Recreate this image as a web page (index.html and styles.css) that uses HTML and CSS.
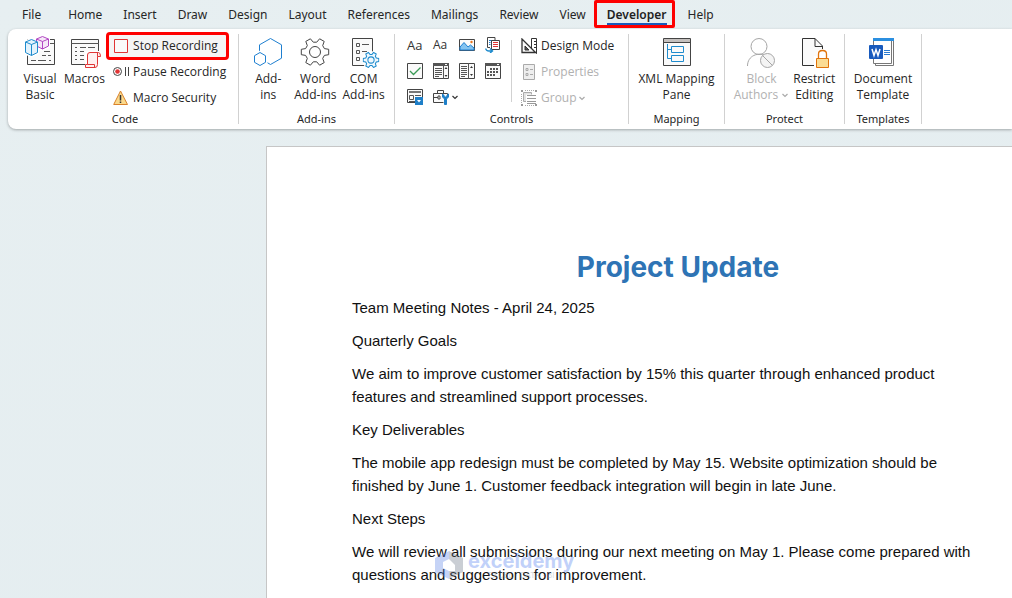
FILE: index.html
```html
<!DOCTYPE html>
<html lang="en">
<head>
<meta charset="utf-8">
<title>Project Update</title>
<link rel="stylesheet" href="styles.css">
</head>
<body>
<svg class="defs" width="0" height="0" aria-hidden="true">
  <symbol id="gear" viewBox="-15 -15 30 30">
    <path d="M9.4-3.4 13.7-2.7V2.7L9.4 3.4 7.7 6.4 9.2 10.6 4.6 13.2 1.7 9.8H-1.7L-4.6 13.2-9.2 10.6-7.7 6.4-9.4 3.4-13.7 2.7V-2.7L-9.4-3.4-7.7-6.4-9.2-10.6-4.6-13.2-1.7-9.8H1.7L4.6-13.2 9.2-10.6 7.7-6.4Z"/>
    <circle r="5.5"/>
  </symbol>
</svg>
<nav class="tabs" aria-label="Ribbon tabs">
  <button class="tab tab-file">File</button>
  <button class="tab">Home</button>
  <button class="tab">Insert</button>
  <button class="tab">Draw</button>
  <button class="tab">Design</button>
  <button class="tab">Layout</button>
  <button class="tab">References</button>
  <button class="tab">Mailings</button>
  <button class="tab">Review</button>
  <button class="tab">View</button>
  <button class="tab tab-active" aria-current="page">Developer</button>
  <button class="tab">Help</button>
</nav>

<div class="ribbon">
  <section class="group group-code">
    <div class="group-body code-body">
      <button class="large">
        <svg class="icon-lg" viewBox="24 36 32 32">
          <path d="M27.500 39.500H54.500V64.500H27.500Z" fill="#fafafa" stroke="#444"/>
          <path d="M44 43.500H54M44 51.500H50M42 55.500H46M48 55.500H51M31 60.500H36M38 60.500H46M49 60.500H51" stroke="#555"/>
          <path d="M24 41 31.500 37.500 35 39V36H50V48L42 51 39 50V54L31.500 57.500 24 54Z" fill="#fff"/>
          <path d="M42.500 36.500 48.500 39V46L42.500 49 36.500 46V39Z" fill="#f6e8f8" stroke="#b146c2"/>
          <path d="M36.500 39 42.500 41.500 48.500 39M42.500 41.500V49" fill="none" stroke="#b146c2"/>
          <path d="M31.500 39.500 37.500 42V52.500L31.500 55.500 25.500 52.500V42Z" fill="#e3f2fc" stroke="#1e8bcd"/>
          <path d="M25.500 42 31.500 44.500 37.500 42M31.500 44.500V55.500" fill="none" stroke="#1e8bcd"/>
        </svg>
        <span>Visual<br>Basic</span>
      </button>
      <button class="large">
        <svg class="icon-lg" viewBox="70 36 32 32">
          <path d="M72.500 39.500H99.500V64.500H72.500Z" fill="#fafafa" stroke="#444"/>
          <path d="M72 43.500H100M76 47.500H78M81 47.500H87M89 47.500H96M76 51.500H78M81 51.500H85M76 55.500H78M81 55.500H85M76 59.500H78M81 59.500H85" fill="none" stroke="#555"/>
          <path d="M86 51H102V68H86Z" fill="#fff"/>
          <path d="M91 52.500H99.500Q101.500 52.500 101.500 56.500H98.500V64.500Q98.500 67.500 96 67.500H86.500V64.500H88.500V55Q88.500 52.500 91 52.500Z" fill="#fff1f1" stroke="#e03535"/>
          <path d="M88.500 64.500H95.500V67M98.500 56.500V53" fill="none" stroke="#e03535"/>
        </svg>
        <span>Macros</span>
      </button>
      <div class="stack">
        <button class="small marked">
          <svg class="icon" viewBox="0 0 16 16"><path d="M1.500 1.500H14.500V14.500H1.500Z" fill="#fafafa" stroke="#e03535"/></svg>
          <span>Stop Recording</span>
        </button>
        <button class="small">
          <svg class="icon" viewBox="0 0 16 16"><circle cx="4.500" cy="7.500" r="4" fill="#fff" stroke="#444"/><circle cx="4.500" cy="7.500" r="2.300" fill="#e03535"/><path d="M12.500 3V12M15.500 3V12" stroke="#444"/></svg>
          <span>Pause Recording</span>
        </button>
        <button class="small">
          <svg class="icon" viewBox="0 0 16 16"><path d="M7.500 1 14.500 14.500H.700Z" fill="#fbd98b" stroke="#d9822b"/><path d="M7.500 5V10.500M7.500 11.500V13" stroke="#333" stroke-width="1.500"/></svg>
          <span>Macro Security</span>
        </button>
      </div>
    </div>
    <h2 class="group-name">Code</h2>
  </section>

  <section class="group">
    <div class="group-body addins-body">
      <button class="large">
        <svg class="icon-lg" viewBox="252 36 32 32" stroke="#1e7fd0" fill="#fafafa">
          <path d="M270.500 38.500 281.500 44.800V58.200L270.500 64.500 259.500 58.200V44.800Z"/>
          <path d="M260 51 267 55V64L260 68 253 64V55Z" fill="#fff" stroke="#fff"/>
          <path d="M260 52.500 265.500 55.700V62.300L260 65.500 254.500 62.300V55.700Z"/>
        </svg>
        <span>Add-<br>ins</span>
      </button>
      <button class="large">
        <svg class="icon-lg" viewBox="298 36 32 32" stroke="#444" fill="#fafafa"><use href="#gear" x="299" y="37" width="30" height="30"/></svg>
        <span>Word<br>Add-ins</span>
      </button>
      <button class="large">
        <svg class="icon-lg" viewBox="348 36 32 32">
          <path d="M352.500 38.500H372.500V65.500H352.500Z" fill="#fafafa" stroke="#444"/>
          <path d="M356.500 43.500H359.500V46.500H356.500ZM356.500 50.500H359.500V53.500H356.500ZM356.500 57.500H359.500V60.500H356.500ZM362 44.500H369M362 51.500H367" fill="none" stroke="#555"/>
          <circle cx="371" cy="60" r="9" fill="#fff"/>
          <g stroke="#1e8bcd" stroke-width="1.800" fill="#eef7fd"><use href="#gear" x="362.500" y="51.500" width="17" height="17"/></g>
        </svg>
        <span>COM<br>Add-ins</span>
      </button>
    </div>
    <h2 class="group-name">Add-ins</h2>
  </section>

  <section class="group">
    <div class="group-body controls-body">
      <div class="palette">
        <button class="tool glyph" aria-label="Rich text control">Aa</button>
        <button class="tool glyph glyph-light" aria-label="Plain text control">Aa</button>
        <button class="tool" aria-label="Picture control"><svg class="icon" viewBox="0 0 16 16"><path d="M.5 2.500H15.500V13.500H.5Z" fill="#fafafa" stroke="#444"/><path d="M1 10 5 5.500 9 10 11.500 8 15 11V13H1Z" fill="#83c3f0" stroke="#1e7fd0"/><circle cx="12.500" cy="5" r="1.200" fill="#e8731c"/></svg></button>
        <button class="tool" aria-label="Building block gallery"><svg class="icon" viewBox="0 0 16 16"><path d="M10 3V.5H2.500V10.500H5" fill="#fff" stroke="#444"/><path d="M4 3.500H8M4 5.500H5.500M4 7.500H5.500" stroke="#1e7fd0"/><path d="M6.500 3.500H14.500V12.500H6.500Z" fill="#fff" stroke="#444"/><path d="M8 5.500H13M8 7.500H13M8 9.500H13" stroke="#e03535"/><path d="M.7 11.500Q1 14 4 14H7M5 11.500 7.500 14 5 16" fill="none" stroke="#1e8bcd" stroke-width="1.400"/></svg></button>
        <button class="tool" aria-label="Check box control"><svg class="icon" viewBox="0 0 16 16"><path d="M.5.5H15.500V15.500H.5Z" fill="#fafafa" stroke="#444"/><path d="M3 8 6.500 11.500 13.500 4.500" fill="none" stroke="#3a9a56" stroke-width="1.300"/></svg></button>
        <button class="tool" aria-label="Combo box control"><svg class="icon" viewBox="0 0 16 16"><path d="M.5.5H15.500V15.500H.5Z" fill="#fafafa" stroke="#444"/><path d="M0 1.500H16" stroke="#555" stroke-width="3"/><path d="M10.500 3V16M2 5.500H9M2 7.500H9M2 9.500H9M2 11.500H9M2 13.500H6" stroke="#555"/><path d="M13 4 14.500 6H11.500ZM13 14 14.500 12H11.500Z" fill="#333"/><path d="M12 1 13 2 14 1" fill="none" stroke="#fff"/></svg></button>
        <button class="tool" aria-label="Drop-down list control"><svg class="icon" viewBox="0 0 16 16"><path d="M.5.5H15.500V15.500H.5Z" fill="#fafafa" stroke="#444"/><path d="M9.500 0V16M2 3.500H8M2 5.500H8M2 7.500H8M2 9.500H8M2 11.500H8M2 13.500H6" stroke="#555"/><path d="M12.500 3 14 5H11ZM12.500 13 14 11H11Z" fill="#333"/></svg></button>
        <button class="tool" aria-label="Date picker control"><svg class="icon" viewBox="0 0 16 16"><path d="M.5.5H15.500V15.500H.5Z" fill="#fafafa" stroke="#444"/><path d="M0 1.500H16" stroke="#555" stroke-width="3"/><path d="M5 6H14M2 9H14M2 12H11" stroke="#555" stroke-width="2" stroke-dasharray="2 1"/><path d="M12 1 13 2 14 1" fill="none" stroke="#fff"/></svg></button>
        <button class="tool" aria-label="Repeating section control"><svg class="icon" viewBox="0 0 16 16"><path d="M.5.500H15.500V13.500H.5Z" fill="#fafafa" stroke="#444"/><path d="M2 3H14" stroke="#777" stroke-width="2"/><path d="M2.500 6.500H6.500V10.500H2.500ZM8 6.500H14M2 12.500H8" fill="none" stroke="#555"/><path d="M8 8H16V16H8Z" fill="#1e7fc8"/><path d="M10 11H14L12 13.500Z" fill="#fff"/></svg></button>
        <button class="tool tool-menu" aria-label="Legacy tools"><svg class="icon" viewBox="0 0 16 16"><path d="M.5 4.500H14.500V13.500H.5ZM4.500 4.500V1.500H10.500V4.500M0 8.500H5M5 7V10H7V7Z" fill="#fafafa" stroke="#444"/><path d="M8.500 6H16.500V16H10.500V10L8.500 8Z" fill="#fff"/><path d="M9.500 5V8L11.500 10V15.500H13.500V10L15.500 8V5L13.800 6.500V8H11.200V6.500Z" fill="#1e7fc8" stroke="#1e7fc8"/></svg><svg class="caret" viewBox="0 0 8 8"><path d="M1.500 3 4 5.500 6.500 3" fill="none" stroke="#333" stroke-width="1.200"/></svg></button>
      </div>
      <div class="stack divided">
        <button class="small">
          <svg class="icon" viewBox="0 0 16 16"><path d="M1 1V14.500H14.500Z" fill="#fafafa" stroke="#333" stroke-width="1.300"/><path d="M4 8V12H8Z" fill="#555" stroke="#333"/><path d="M10.500.5H15.500V15.500L10.500 10.500ZM13 3.500H16M13 6.500H16M13 9.500H16" fill="none" stroke="#333"/></svg>
          <span>Design Mode</span>
        </button>
        <button class="small" disabled>
          <svg class="icon" viewBox="0 0 16 16"><path d="M2.500.500H13.500V15.500H2.500Z" fill="#eee" stroke="#aaa"/><path d="M5 4.500H7V6.500H5ZM5 9.500H7V11.500H5ZM9 5.500H12M9 10.500H12" fill="none" stroke="#aaa"/></svg>
          <span>Properties</span>
        </button>
        <button class="small" disabled>
          <svg class="icon" viewBox="0 0 16 16"><path d="M2.500 2.500H10.500V11.500H2.500Z" fill="#e2e2e2" stroke="#aaa"/><path d="M5 4.500H16V14.500H5Z" fill="#fff"/><path d="M6 5.500H15M6 8.500H15M6 11.500H15M6 13.500H15" stroke="#999"/><path d="M0 0H2V2H0ZM14 0H16V2H14ZM0 14H2V16H0ZM14 14H16V16H14Z" fill="#999"/><path d="M4 .5H13M4 15.500H13M.5 4V13" stroke="#aaa" stroke-dasharray="1 1"/></svg>
          <span>Group</span>
          <svg class="caret caret-near" viewBox="0 0 8 8"><path d="M1.500 3 4 5.500 6.500 3" fill="none" stroke="#aaa" stroke-width="1.200"/></svg>
        </button>
      </div>
    </div>
    <h2 class="group-name">Controls</h2>
  </section>

  <section class="group">
    <div class="group-body center-body">
      <button class="large">
        <svg class="icon-lg" viewBox="661 36 32 32">
          <path d="M663.500 38.500H690.500V65.500H663.500Z" fill="#fafafa" stroke="#444"/>
          <path d="M664 39H690V42H664Z" fill="#c4c0be"/><path d="M663 42.500H691" stroke="#444"/>
          <path d="M667.500 44V58.500H671M667.500 49.500H671M671.500 46.500H683.500V52.500H671.500ZM671.500 55.500H683.500V61.500H671.500Z" fill="none" stroke="#1e8bcd"/>
        </svg>
        <span>XML Mapping<br>Pane</span>
      </button>
    </div>
    <h2 class="group-name">Mapping</h2>
  </section>

  <section class="group">
    <div class="group-body center-body">
      <button class="large" disabled>
        <svg class="icon-lg" viewBox="748 36 32 32" fill="#f1f1f1" stroke="#a6a6a6">
          <path d="M750.500 66C750.500 51 772 51 773 62V66"/><circle cx="762" cy="46.500" r="8"/>
          <circle cx="770.500" cy="60.500" r="7" fill="#f4f4f4"/><path d="M765.500 55.500 775.500 65.500"/>
        </svg>
        <span>Block<br>Authors <svg class="caret" viewBox="0 0 8 8"><path d="M1.500 3 4 5.500 6.500 3" fill="none" stroke="#aaa" stroke-width="1.200"/></svg></span>
      </button>
      <button class="large">
        <svg class="icon-lg" viewBox="800 36 32 32">
          <path d="M804.500 38.500H817L824.500 46V65.500H804.500Z" fill="#fafafa" stroke="#333"/><path d="M817 38.500V46.500H824.500" fill="none" stroke="#333"/>
          <path d="M816 56H833V68H816Z" fill="#fff"/><path d="M819 57V54Q819 49 824.500 49T830 54V57Z" fill="#fff"/>
          <path d="M820.500 58V54Q820.500 50.500 824.500 50.500T828.500 54V58" fill="none" stroke="#e0730c" stroke-width="1.300"/><path d="M818.500 58.500H830.500V67.500H818.500Z" fill="#fbdc94" stroke="#e0730c"/>
        </svg>
        <span>Restrict<br>Editing</span>
      </button>
    </div>
    <h2 class="group-name">Protect</h2>
  </section>

  <section class="group">
    <div class="group-body center-body">
      <button class="large">
        <svg class="icon-lg" viewBox="867 36 32 32">
          <path d="M875.500 41V65.500H893.500V38" fill="#fff" stroke="#777"/><path d="M873.500 38.500H891.500V63.500H873.500Z" fill="#fff" stroke="#777"/>
          <path d="M873 38H894V41H873Z" fill="#2b8fe0"/><path d="M884 50.500H890M884 52.500H890M884 54.500H890" stroke="#2b7cd3"/>
          <rect x="869" y="45" width="14" height="14" rx="1" fill="#185abd"/><path d="M872 49 874 55.500 876 49.500 878 55.500 880 49" fill="none" stroke="#fff" stroke-width="1.500"/>
        </svg>
        <span>Document<br>Template</span>
      </button>
    </div>
    <h2 class="group-name">Templates</h2>
  </section>
</div>

<main class="page">
  <h1>Project Update</h1>
  <p>Team Meeting Notes - April 24, 2025</p>
  <p>Quarterly Goals</p>
  <p>We aim to improve customer satisfaction by 15% this quarter through enhanced product features and streamlined support processes.</p>
  <p>Key Deliverables</p>
  <p>The mobile app redesign must be completed by May 15. Website optimization should be finished by June 1. Customer feedback integration will begin in late June.</p>
  <p>Next Steps</p>
  <p>We will review all submissions during our next meeting on May 1. Please come prepared with questions and suggestions for improvement.</p>
  <div class="watermark">
    <svg class="watermark-logo" viewBox="0 0 28 28"><path d="M14 0 28 7V21L14 28Z" fill="#6b7486"/><path d="M14 0 0 7V21L14 28V20L8 17V11L14 8Z" fill="#5b84e8"/><path d="M14 8 20 14V20H14Z" fill="#fff"/></svg>
    <div class="watermark-text"><strong>exceldemy</strong><small>EXCEL · DATA · BI</small></div>
  </div>
</main>
</body>
</html>
```
FILE: styles.css
```css
* { box-sizing: border-box; }

body {
  margin: 0;
  min-height: 100vh;
  overflow: hidden;
  display: flex;
  flex-direction: column;
  background: linear-gradient(160deg, #e7eff1, #e4edf0);
  color: #262626;
  font: 12px/16px "Noto Sans", "Open Sans", sans-serif;
}

button {
  margin: 0;
  padding: 0;
  border: 0;
  background: none;
  color: inherit;
  font: inherit;
}

button:disabled { color: #b1b1b1; }

.defs { position: absolute; }

/* Tabs */
.tabs {
  display: flex;
  gap: 21px;
  height: 29px;
  padding: 0 22px;
}

.tab { position: relative; white-space: nowrap; }
.tab-file { margin-right: 6px; }
.tab-active { font-weight: 600; color: #222; }

.tab-active::before {
  content: "";
  position: absolute;
  inset: 23px 0 4px;
  background: #185abd;
}

.tab-active::after {
  content: "";
  position: absolute;
  inset: 0 -8px 1px -13px;
  border: 3px solid #fe0000;
  border-radius: 2px;
}

/* Ribbon */
.ribbon {
  display: grid;
  grid-template-columns: 231px 156px 234px 96px 120px 77px;
  margin-left: 8px;
  padding: 5px 0;
  background: #fff;
  border-radius: 8px 0 0 8px;
  box-shadow: 0 1px 3px #0000004d;
}

.group {
  display: flex;
  flex-direction: column;
  border-right: 1px solid #d1d1d1;
}

.group-code { padding-left: 4px; }

.group-body {
  display: flex;
  height: 78px;
  font-family: "Open Sans", "Noto Sans", sans-serif;
}

.group-name {
  margin: 0;
  padding-top: 1px;
  font-size: 11px;
  line-height: 11px;
  font-weight: 400;
  text-align: center;
}

.code-body { padding-left: 8px; gap: 4px; }
.addins-body { justify-content: center; gap: 6px; }
.center-body { justify-content: center; gap: 4px; }

.large {
  display: flex;
  flex-direction: column;
  align-items: center;
  gap: 3px;
  padding-top: 2px;
  min-width: 40px;
  white-space: nowrap;
}

.icon-lg { width: 32px; height: 32px; fill: none; flex: none; }
.icon { width: 16px; height: 16px; flex: none; fill: none; }
.caret { width: 8px; height: 8px; flex: none; }
.caret-near { margin-left: -3px; }

.stack { display: flex; flex-direction: column; align-items: flex-start; gap: 4px; padding-top: 1px; }

.small {
  display: flex;
  align-items: center;
  gap: 4px;
  height: 22px;
  padding: 0 4px;
  white-space: nowrap;
}

.marked {
  padding-right: 8px;
  background: #f5f5f5;
  outline: 3px solid #fe0000;
  border-radius: 1px;
}

.controls-body { padding-left: 12px; gap: 10px; }

.palette {
  display: grid;
  grid-template-columns: repeat(4, 16px);
  grid-auto-rows: 22px;
  gap: 4px 10px;
}

.tool { display: flex; align-items: center; gap: 2px; }
.glyph { color: #333; font-size: 13px; }
.glyph-light { font-size: 12px; }

.divided {
  padding-left: 6px;
  background: linear-gradient(#d1d1d1, #d1d1d1) 0 6px / 1px 62px no-repeat;
}

/* Document */
.page {
  position: relative;
  flex: 1;
  margin: 17px 0 0 266px;
  padding: 101px 8px 0 85px;
  border: solid #c6c6c6;
  border-width: 1px 0 0 1px;
  background: #fff;
  color: #111;
  font: 15px/23px "Liberation Sans", Arial, sans-serif;
}

.page h1 {
  margin: 0 0 10px;
  color: #2e74b5;
  font: 700 28px/38px Inter, Roboto, sans-serif;
  text-align: center;
}

.page p { margin: 0 0 10px; padding-right: 20px; }

.watermark {
  position: absolute;
  left: 168px;
  top: 404px;
  display: flex;
  gap: 5px;
  opacity: 0.35;
}

.watermark-logo { width: 28px; height: 28px; }
.watermark-text { display: flex; flex-direction: column; align-items: center; font-family: Inter, sans-serif; }
.watermark-text strong { color: #4f7df0; font-size: 20px; line-height: 20px; }
.watermark-text small { color: #8a94a6; font-size: 8px; line-height: 8px; }
```
